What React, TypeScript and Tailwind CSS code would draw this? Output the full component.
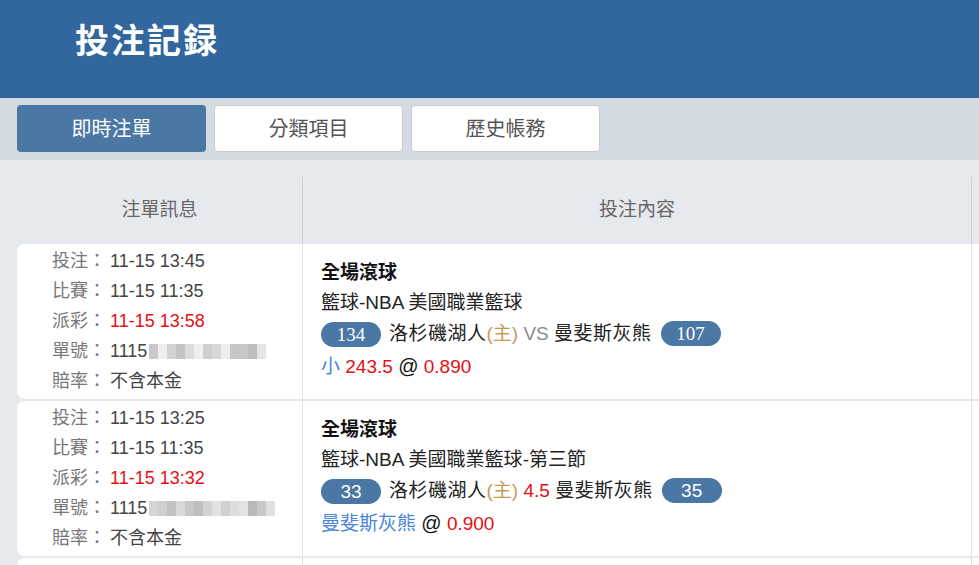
import React from "react";

const SANS = "font-['Liberation_Sans','Noto_Sans_CJK_TC',sans-serif]";

type Row = {
  bet: string;
  match: string;
  pay: string;
  blur: string[];
  league: string;
  home: string;
  away: string;
  mid: React.ReactNode;
  serifPill: boolean;
  pick: React.ReactNode;
};

function Pill({ n, serif }: { n: string; serif: boolean }) {
  return (
    <span
      className={`inline-flex items-center justify-center w-[60px] h-[25px] rounded-full bg-[#4a77a3] text-white text-[19px] leading-none ${
        serif ? "font-['Liberation_Serif',serif]" : "font-['Liberation_Sans',sans-serif]"
      }`}
    >
      {n}
    </span>
  );
}

function Blur({ shades }: { shades: string[] }) {
  return (
    <span className="inline-flex items-center h-[20px] ml-[2px] blur-[0.6px]">
      {shades.map((c, i) => (
        <span key={i} className="inline-block w-[9px] h-[15px]" style={{ background: c }} />
      ))}
    </span>
  );
}

const RED = "text-[#e60f14]";

const rows: Row[] = [
  {
    bet: "11-15 13:45",
    match: "11-15 11:35",
    pay: "11-15 13:58",
    blur: ["#c9c9c9", "#eeeeee", "#d2d2d2", "#c4c4c4", "#dcdcdc", "#efefef", "#cfcfcf", "#d8d8d8", "#eeeeee", "#c6c6c6", "#c8c8c8", "#bdbdbd", "#e6e6e6"],
    league: "籃球-NBA 美國職業籃球",
    home: "134",
    away: "107",
    mid: <span className="text-[#8a8a8a]"> VS </span>,
    serifPill: true,
    pick: (
      <span>
        <span className="text-[#4a86d8]">小</span> <span className={RED}>243.5</span>{" "}
        <span className="text-[#111] text-[20px]">@</span> <span className={RED}>0.890</span>
      </span>
    ),
  },
  {
    bet: "11-15 13:25",
    match: "11-15 11:35",
    pay: "11-15 13:32",
    blur: ["#d6d6d6", "#cfcfcf", "#c2c2c2", "#d9d9d9", "#c7c7c7", "#bebebe", "#d3d3d3", "#e2e2e2", "#d0d0d0", "#dedede", "#e3e3e3", "#b9b9b9", "#c8c8c8", "#e0e0e0"],
    league: "籃球-NBA 美國職業籃球-第三節",
    home: "33",
    away: "35",
    mid: <span className={RED}> 4.5 </span>,
    serifPill: false,
    pick: (
      <span>
        <span className="text-[#4a86d8]">曼斐斯灰熊</span> <span className="text-[#111] text-[20px]">@</span>{" "}
        <span className={RED}>0.900</span>
      </span>
    ),
  },
];

function InfoLine({ label, value, red }: { label: string; value: React.ReactNode; red?: boolean }) {
  return (
    <div className="flex h-[30px] items-center">
      <span className="w-[58px] text-[#777]">{label}：</span>
      <span className={red ? RED : "text-[#444]"}>{value}</span>
    </div>
  );
}

export default function App() {
  return (
    <div className={`w-[979px] h-[565px] overflow-hidden bg-[#e6e9ee] ${SANS}`}>
      <div className="h-[98px] bg-[#31669e] pl-[75px] pt-[24px]">
        <div className="text-[34px] leading-[36px] font-bold text-white tracking-[2px] font-['Liberation_Serif','Noto_Sans_CJK_TC',serif]">
          投注記録
        </div>
      </div>
      <div className="h-[62px] bg-[#d5dbe3] px-[17px] pt-[7px] flex gap-[8px]">
        <div className="w-[189px] h-[47px] rounded-[4px] bg-[#4a77a3] text-white text-[20px] flex items-center justify-center">
          即時注單
        </div>
        <div className="w-[189px] h-[47px] rounded-[4px] bg-white border border-[#c5ccd5] text-[#555] text-[20px] flex items-center justify-center">
          分類項目
        </div>
        <div className="w-[189px] h-[47px] rounded-[4px] bg-white border border-[#c5ccd5] text-[#555] text-[20px] flex items-center justify-center">
          歷史帳務
        </div>
      </div>
      <div className="pl-[17px] pt-[17px]">
        <div className="grid grid-cols-[285px_669px_1fr] h-[67px] text-[19px] text-[#666]">
          <div className="flex items-center justify-center">注單訊息</div>
          <div className="flex items-center justify-center border-l border-[#cdd2d8]">投注內容</div>
          <div className="border-l border-[#cdd2d8]" />
        </div>
        {[...rows, null].map((r, i) => (
          <div key={i} className="grid grid-cols-[285px_669px_1fr] h-[155px] mb-[2px]">
            <div className="bg-white rounded-l-[8px] pl-[35px] pt-[2px] text-[18px]">
              {r && (
                <>
                  <InfoLine label="投注" value={r.bet} />
                  <InfoLine label="比賽" value={r.match} />
                  <InfoLine label="派彩" value={r.pay} red />
                  <InfoLine
                    label="單號"
                    value={
                      <span className="inline-flex items-center">
                        1115
                        <Blur shades={r.blur} />
                      </span>
                    }
                  />
                  <InfoLine label="賠率" value="不含本金" />
                </>
              )}
            </div>
            <div className="bg-white border-l border-[#e2e2e2] pl-[18px] pt-[14px] text-[19px] text-[#222]">
              {r && (
                <>
                  <div className="h-[30px] flex items-center font-bold text-[#111]">全場滾球</div>
                  <div className="h-[30px] flex items-center">{r.league}</div>
                  <div className="h-[32px] flex items-center whitespace-pre">
                    <Pill n={r.home} serif={r.serifPill} />
                    <span className="ml-[8px] tracking-[0.5px]">洛杉磯湖人</span>
                    <span className="text-[#c99a56]">(主)</span>
                    {r.mid}
                    <span className="tracking-[0.5px]">曼斐斯灰熊</span>
                    <span className="ml-[9px]">
                      <Pill n={r.away} serif={r.serifPill} />
                    </span>
                  </div>
                  <div className="h-[32px] flex items-center whitespace-pre">{r.pick}</div>
                </>
              )}
            </div>
            <div className="bg-white border-l border-[#e2e2e2]" />
          </div>
        ))}
      </div>
    </div>
  );
}
